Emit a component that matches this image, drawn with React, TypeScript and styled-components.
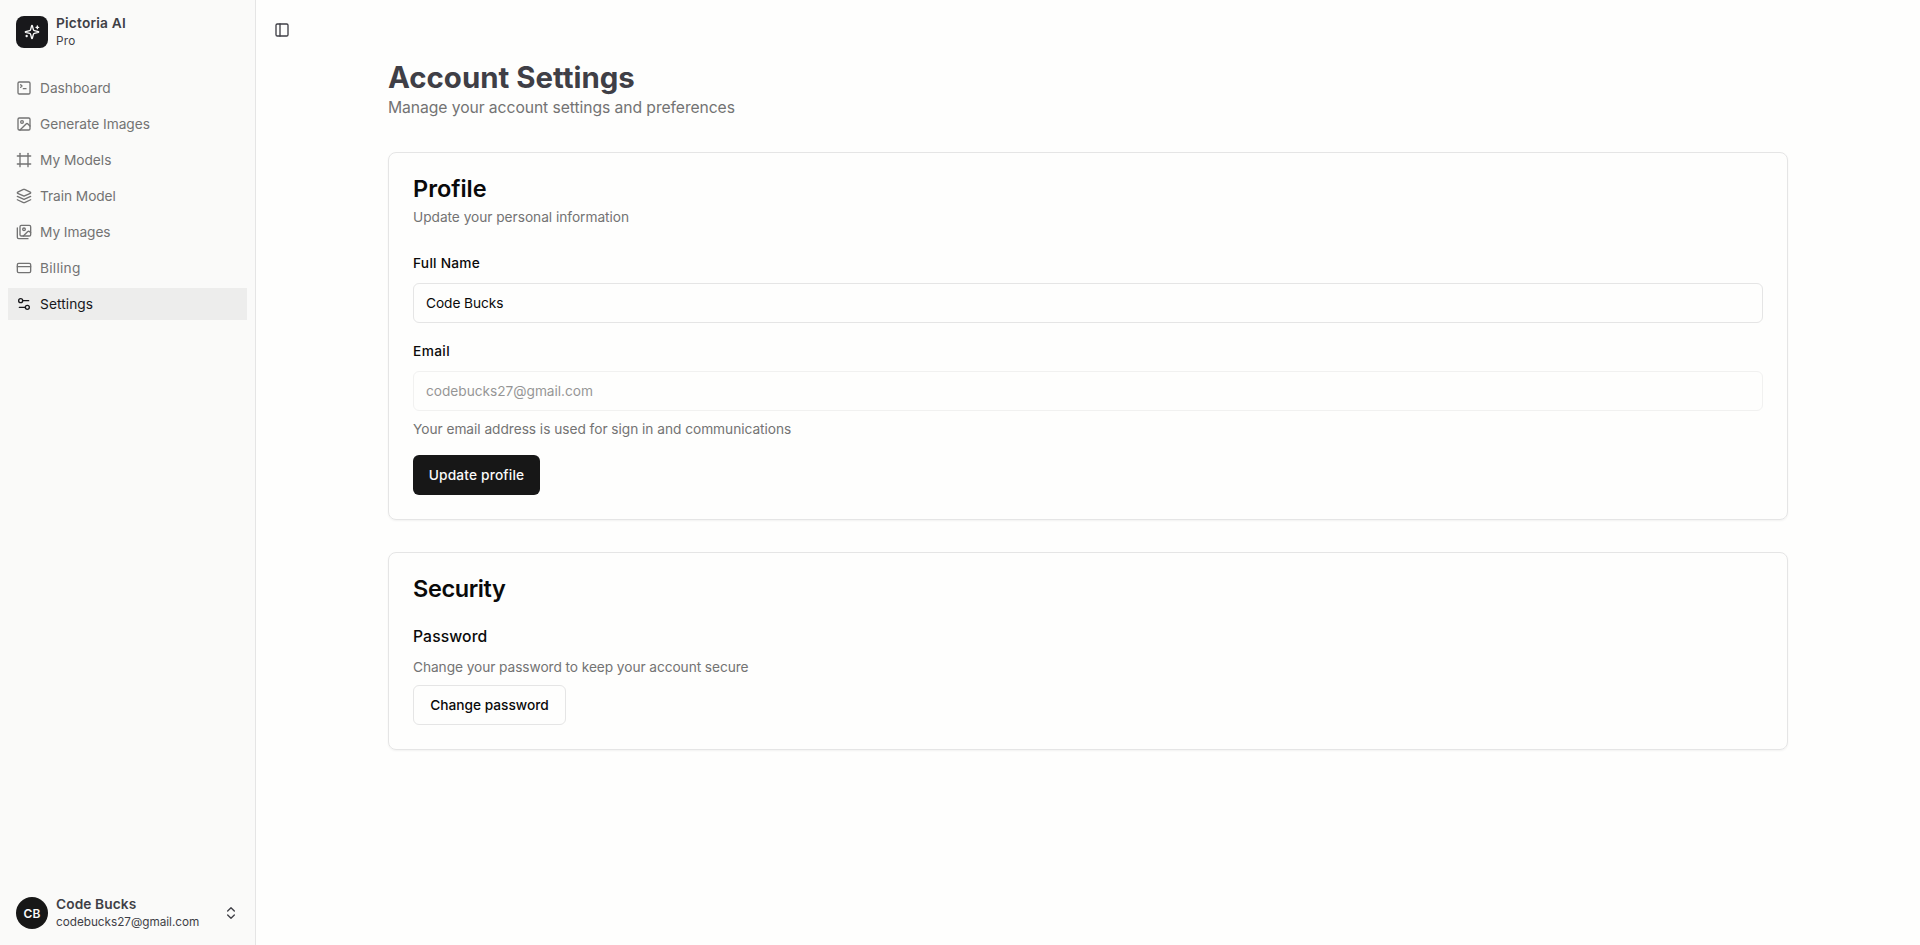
import React from "react";
import styled, { createGlobalStyle } from "styled-components";
import {
  ChevronsUpDown,
  CreditCard,
  Frame,
  Image as ImageIcon,
  PanelLeft,
  Settings2,
  SquareTerminal,
} from "lucide-react";

const GlobalStyle = createGlobalStyle`
  *, *::before, *::after { box-sizing: border-box; }
  body {
    margin: 0;
    background: #fefefd;
    color: #0a0a0a;
    font-family: Inter, "Liberation Sans", sans-serif;
  }
  h1, h2, h3, p { margin: 0; }
  button, input { font-family: inherit; }
`;

/* ---------- icons ---------- */

const Glyph = styled.svg.attrs({
  width: 16,
  height: 16,
  viewBox: "0 0 24 24",
  fill: "none",
  stroke: "currentColor",
  strokeWidth: 2,
  strokeLinecap: "round",
  strokeLinejoin: "round",
})`
  flex-shrink: 0;
`;

const SparklesIcon = () => (
  <Glyph>
    <path d="M9.937 15.5A2 2 0 0 0 8.5 14.063l-6.135-1.582a.5.5 0 0 1 0-.962L8.5 9.936A2 2 0 0 0 9.937 8.5l1.582-6.135a.5.5 0 0 1 .963 0L14.063 8.5A2 2 0 0 0 15.5 9.937l6.135 1.581a.5.5 0 0 1 0 .964L15.5 14.063a2 2 0 0 0-1.437 1.437l-1.582 6.135a.5.5 0 0 1-.963 0z" />
    <path d="M20 3v4M22 5h-4M4 17v2M5 18H3" />
  </Glyph>
);

const LayersIcon = () => (
  <Glyph>
    <path d="m12.83 2.18a2 2 0 0 0-1.66 0L2.6 6.08a1 1 0 0 0 0 1.83l8.58 3.91a2 2 0 0 0 1.66 0l8.58-3.9a1 1 0 0 0 0-1.83Z" />
    <path d="m22 17.65-9.17 4.16a2 2 0 0 1-1.66 0L2 17.65" />
    <path d="m22 12.65-9.17 4.16a2 2 0 0 1-1.66 0L2 12.65" />
  </Glyph>
);

const ImagesIcon = () => (
  <Glyph>
    <path d="M18 22H4a2 2 0 0 1-2-2V6" />
    <path d="m22 13-1.296-1.296a2.41 2.41 0 0 0-3.408 0L11 18" />
    <circle cx="12" cy="8" r="2" />
    <rect width="16" height="16" x="6" y="2" rx="2" />
  </Glyph>
);

/* ---------- shell ---------- */

const Shell = styled.div`
  display: flex;
  height: 945px;
`;

const Sidebar = styled.aside`
  display: flex;
  flex-direction: column;
  width: 256px;
  flex-shrink: 0;
  border-right: 1px solid #e5e5e5;
  background: #fafaf9;
  color: #3f3f46;
`;

const Account = styled.div`
  display: flex;
  align-items: center;
  gap: 8px;
  height: 48px;
  margin: 8px;
  padding: 8px;
`;

const Badge = styled.div<{ $round?: boolean }>`
  display: flex;
  align-items: center;
  justify-content: center;
  width: 32px;
  height: 32px;
  flex-shrink: 0;
  border-radius: ${(p) => (p.$round ? "50%" : "8px")};
  background: ${(p) => (p.$round ? "#171717" : "#18181b")};
  color: #fafafa;
  font-size: 12px;
  font-weight: 600;
`;

const AccountText = styled.div`
  display: grid;
  flex: 1;
`;

const AccountName = styled.span<{ $track?: number }>`
  font-size: 13.72px;
  font-weight: 600;
  line-height: 18px;
  letter-spacing: ${(p) => p.$track ?? 0}px;
`;

const AccountNote = styled.span<{ $track?: number }>`
  font-size: 11.76px;
  line-height: 18px;
  letter-spacing: ${(p) => p.$track ?? 0}px;
`;

const Menu = styled.nav`
  display: flex;
  flex: 1;
  flex-direction: column;
  gap: 4px;
  padding: 8px 8px;
`;

const MenuItem = styled.a<{ $active?: boolean; $track: number }>`
  display: flex;
  align-items: center;
  gap: 8px;
  height: 32px;
  padding: 8px;
  background: ${(p) => (p.$active ? "#ededec" : "transparent")};
  color: ${(p) => (p.$active ? "#18181b" : "#737373")};
  font-size: 13.72px;
  line-height: 20px;
  letter-spacing: ${(p) => p.$track}px;
`;

/* ---------- content ---------- */

const Main = styled.main`
  display: flex;
  flex: 1;
  flex-direction: column;
`;

const TopBar = styled.header`
  display: flex;
  align-items: center;
  height: 60px;
  padding: 0 12px;
`;

const IconButton = styled.button`
  display: flex;
  align-items: center;
  justify-content: center;
  width: 28px;
  height: 28px;
  padding: 0;
  border: 0;
  background: none;
  color: #3f3f46;
`;

const Page = styled.div`
  display: flex;
  flex-direction: column;
  gap: 32px;
  width: 1400px;
  margin: 0 auto;
`;

const PageTitle = styled.h1`
  color: #3f3f46;
  font-size: 29.4px;
  font-weight: 700;
  line-height: 36px;
  letter-spacing: 0;
`;

const PageLead = styled.p`
  color: #737373;
  font-size: 15.68px;
  line-height: 24px;
  letter-spacing: -0.065px;
`;

const Card = styled.section`
  display: flex;
  flex-direction: column;
  gap: 24px;
  padding: 24px;
  border: 1px solid #e5e5e5;
  border-radius: 8px;
  box-shadow: 0 1px 2px rgba(0, 0, 0, 0.05);
`;

const CardHeader = styled.header`
  display: flex;
  flex-direction: column;
  gap: 6px;
`;

const CardTitle = styled.h2<{ $track: number }>`
  font-size: 23.5px;
  font-weight: 600;
  line-height: 24px;
  letter-spacing: ${(p) => p.$track}px;
`;

const Hint = styled.p<{ $track?: number }>`
  color: #737373;
  font-size: 13.72px;
  line-height: 20px;
  letter-spacing: ${(p) => p.$track ?? -0.04}px;
`;

const Form = styled.form`
  display: flex;
  flex-direction: column;
  align-items: flex-start;
  gap: 16px;
`;

const Field = styled.div`
  display: flex;
  flex-direction: column;
  align-items: stretch;
  gap: 8px;
  width: 100%;
`;

const Label = styled.label<{ $track: number }>`
  font-size: 13.72px;
  font-weight: 500;
  line-height: 24px;
  letter-spacing: ${(p) => p.$track}px;
`;

const Input = styled.input<{ $track: number }>`
  height: 40px;
  padding: 8px 12px;
  border: 1px solid #e5e5e5;
  border-radius: 6px;
  background: #fefefd;
  color: #0a0a0a;
  font-size: 13.72px;
  line-height: 20px;
  letter-spacing: ${(p) => p.$track}px;

  &:disabled {
    color: #2f2f2f;
    opacity: 0.5;
  }
`;

const Subheading = styled.h3`
  font-size: 15.68px;
  font-weight: 500;
  line-height: 24px;
  letter-spacing: 0.12px;
`;

const Button = styled.button<{ $outline?: boolean }>`
  align-self: flex-start;
  width: ${(p) => (p.$outline ? 153 : 127)}px;
  height: 40px;
  padding: 0;
  border: ${(p) => (p.$outline ? "1px solid #e5e5e5" : "0")};
  border-radius: 6px;
  background: ${(p) => (p.$outline ? "#fefefd" : "#171717")};
  color: ${(p) => (p.$outline ? "#0a0a0a" : "#fafafa")};
  font-size: 13.72px;
  font-weight: 500;
  line-height: 20px;
  letter-spacing: ${(p) => (p.$outline ? -0.017 : 0.167)}px;
`;

const items = [
  { label: "Dashboard", icon: <SquareTerminal size={16} />, track: 0 },
  { label: "Generate Images", icon: <ImageIcon size={16} />, track: -0.04 },
  { label: "My Models", icon: <Frame size={16} />, track: -0.03 },
  { label: "Train Model", icon: <LayersIcon />, track: -0.07 },
  { label: "My Images", icon: <ImagesIcon />, track: -0.06 },
  { label: "Billing", icon: <CreditCard size={16} />, track: 0.26 },
  { label: "Settings", icon: <Settings2 size={16} />, track: 0.08, active: true },
];

export default function App() {
  return (
    <Shell>
      <GlobalStyle />
      <Sidebar>
        <Account>
          <Badge>
            <SparklesIcon />
          </Badge>
          <AccountText>
            <AccountName $track={0.2}>Pictoria AI</AccountName>
            <AccountNote $track={0.28}>Pro</AccountNote>
          </AccountText>
        </Account>
        <Menu>
          {items.map((item) => (
            <MenuItem key={item.label} $active={item.active} $track={item.track}>
              {item.icon}
              {item.label}
            </MenuItem>
          ))}
        </Menu>
        <Account>
          <Badge $round>CB</Badge>
          <AccountText>
            <AccountName $track={0.096}>Code Bucks</AccountName>
            <AccountNote $track={-0.02}>codebucks27@gmail.com</AccountNote>
          </AccountText>
          <ChevronsUpDown size={16} />
        </Account>
      </Sidebar>
      <Main>
        <TopBar>
          <IconButton aria-label="Toggle sidebar">
            <PanelLeft size={16} />
          </IconButton>
        </TopBar>
        <Page>
          <div>
            <PageTitle>Account Settings</PageTitle>
            <PageLead>Manage your account settings and preferences</PageLead>
          </div>
          <Card>
            <CardHeader>
              <CardTitle $track={-0.03}>Profile</CardTitle>
              <Hint>Update your personal information</Hint>
            </CardHeader>
            <Form>
              <Field>
                <Label $track={0.25}>Full Name</Label>
                <Input $track={-0.09} defaultValue="Code Bucks" />
              </Field>
              <Field>
                <Label $track={0.36}>Email</Label>
                <Input $track={-0.038} defaultValue="codebucks27@gmail.com" disabled />
                <Hint>Your email address is used for sign in and communications</Hint>
              </Field>
              <Button type="button">Update profile</Button>
            </Form>
          </Card>
          <Card>
            <CardTitle $track={-0.4}>Security</CardTitle>
            <Field>
              <Subheading>Password</Subheading>
              <Hint $track={-0.075}>Change your password to keep your account secure</Hint>
              <Button $outline>Change password</Button>
            </Field>
          </Card>
        </Page>
      </Main>
    </Shell>
  );
}
